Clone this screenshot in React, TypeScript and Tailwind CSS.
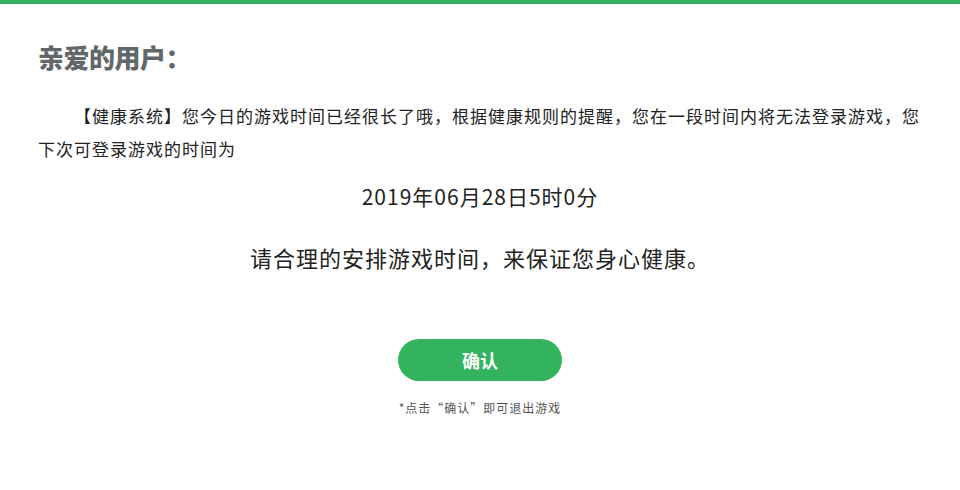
const font = "font-['Noto_Sans_CJK_SC','Noto_Sans',sans-serif]";

export default function App() {
  return (
    <div className={`w-[960px] h-[490px] bg-white flex flex-col ${font}`}>
      <div className="h-[4px] bg-[#33b35f]" />
      <div className="flex flex-col px-[38px]">
        <h1 className="mt-[35px] text-[26px] leading-[36px] font-black text-[#626769] tracking-[-0.5px]">
          亲爱的用户：
        </h1>
        <p className="mt-[24px] text-[17px] leading-[33px] text-[#222] indent-[36px] tracking-[1px]">
          【健康系统】您今日的游戏时间已经很长了哦，根据健康规则的提醒，您在一段时间内将无法登录游戏，您下次可登录游戏的时间为
        </p>
        <div className="mt-[15px] text-center text-[21px] leading-[32px] text-[#222] tracking-[1px]">
          2019年06月28日5时0分
        </div>
        <div className="mt-[29px] text-center text-[22px] leading-[32px] text-[#222] tracking-[1px]">
          请合理的安排游戏时间，来保证您身心健康。
        </div>
        <div className="mt-[66px] flex justify-center">
          <button className="w-[164px] h-[42px] rounded-full bg-[#33b35f] text-white text-[18px] font-bold">
            确认
          </button>
        </div>
        <div className="mt-[18px] text-center text-[12px] leading-[18px] text-[#555] tracking-[1px]">
          *点击“确认”即可退出游戏
        </div>
      </div>
    </div>
  );
}
